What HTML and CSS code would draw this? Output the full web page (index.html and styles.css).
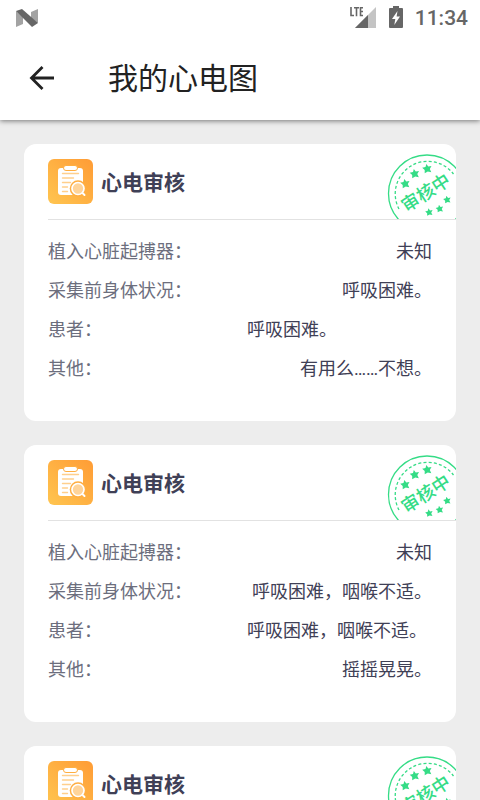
FILE: index.html
```html
<!DOCTYPE html>
<html lang="zh-CN">
<head>
    <meta charset="UTF-8">
    <meta name="viewport" content="width=device-width, initial-scale=1.0">
    <title>我的心电图</title>
    <link rel="stylesheet" href="styles.css">
</head>
<body>
    <!-- 图标定义 -->
    <svg class="defs" width="0" height="0" aria-hidden="true">
        <defs>
            <linearGradient id="orange" x1="0" y1="1" x2="1" y2="0">
                <stop offset="0" stop-color="#ffc550"/>
                <stop offset="1" stop-color="#ff9c35"/>
            </linearGradient>
            <path id="star" d="M-.7-4.600 1.300-2 4.500-2.400 2.800.5 4.300 3.800.8 3-2.300 4.800-2.300 1.500-4.800-.7-1.500-1.600Z"/>
        </defs>
        <symbol id="report" viewBox="0 0 45 45">
            <rect width="45" height="45" rx="6" fill="url(#orange)"/>
            <rect x="10" y="9" width="25" height="27" rx="3" fill="#fff"/>
            <rect x="15.500" y="6.500" width="14" height="5" rx="2.500" fill="#fff" stroke="#ffae40"/>
            <path d="M14.500 14.500h16M14.500 19h11M14.500 23.500h8M14.500 28h5M14.500 32.500h5" fill="none" stroke="#ffcf8c" stroke-width="1.400" stroke-linecap="round"/>
            <circle cx="30" cy="29.500" r="8.300" fill="#ffae42"/>
            <path d="M34 33.500 36.500 36" stroke="#fff" stroke-width="2" stroke-linecap="round"/>
            <circle cx="30" cy="29.500" r="6" fill="#ffd49a" stroke="#fff" stroke-width="1.700"/>
        </symbol>
        <symbol id="stamp" viewBox="0 0 69 66">
            <g fill="none" stroke="#35dc86">
                <circle cx="40" cy="40.500" r="38.500" stroke-width="1.300"/>
                <path d="M12 56A32.500 32.500 0 0 1 66.500 21" stroke-width="1.300" stroke-dasharray="3 2.200"/>
            </g>
            <g fill="#35dc86">
                <use href="#star" x="18" y="30.500"/>
                <use href="#star" x="27.500" y="20.500"/>
                <use href="#star" x="40" y="15.500"/>
                <g transform="translate(42 59) scale(.8)"><use href="#star"/></g>
                <g transform="translate(52.500 55.500) scale(.8)"><use href="#star"/></g>
                <g transform="translate(60 46.500) scale(.8)"><use href="#star"/></g>
            </g>
        </symbol>
    </svg>

    <header>
        <div class="status-bar">
            <svg width="24" height="20" viewBox="0 0 24 20" aria-hidden="true">
                <path d="M0 3 7 9V16L0 19ZM22 1V15L15 10V4Z" fill="#a3a3a3"/>
                <path d="M0 3 6 1 22 15 16 19Z" fill="#666"/>
            </svg>
            <div class="status-right">
                <svg width="27" height="24" viewBox="0 0 27 24" aria-hidden="true">
                    <path d="M26 1V22H5Z" fill="#c4c4c4"/>
                    <path d="M18 9V22H5Z" fill="#666"/>
                    <path d="M1 1V9.500H4M4 1.800H9M6.500 1.800V10.300M13 1.800H10.500V9.500H13M10.500 5.500H13" fill="none" stroke="#666" stroke-width="1.600"/>
                </svg>
                <svg width="14" height="24" viewBox="0 0 14 24" aria-hidden="true">
                    <path d="M4 0H10V2H13Q14 2 14 3V21Q14 22 13 22H1Q0 22 0 21V3Q0 2 1 2H4Z" fill="#666"/>
                    <path d="M8.500 5 3 13H6.300L5.300 19 11 10.500H7.600Z" fill="#fff"/>
                </svg>
                <span class="time">11:34</span>
            </div>
        </div>
        <div class="app-bar">
            <button class="back" aria-label="返回">
                <svg width="26" height="26" viewBox="0 0 26 26" aria-hidden="true">
                    <path d="M25 13H3M13.500 2 2.500 13 13.500 24" fill="none" stroke="#222" stroke-width="2.800"/>
                </svg>
            </button>
            <h1>我的心电图</h1>
        </div>
    </header>

    <main>
        <section class="card">
            <div class="card-head">
                <svg class="report" aria-hidden="true"><use href="#report"/></svg>
                <h2>心电审核</h2>
                <div class="stamp">
                    <svg aria-hidden="true"><use href="#stamp"/></svg>
                    <span>审核中</span>
                </div>
            </div>
            <dl>
                <div class="row"><dt>植入心脏起搏器：</dt><dd>未知</dd></div>
                <div class="row"><dt>采集前身体状况：</dt><dd>呼吸困难。</dd></div>
                <div class="row"><dt>患者：</dt><dd class="patient">呼吸困难。</dd></div>
                <div class="row"><dt>其他：</dt><dd>有用么……不想。</dd></div>
            </dl>
        </section>

        <section class="card">
            <div class="card-head">
                <svg class="report" aria-hidden="true"><use href="#report"/></svg>
                <h2>心电审核</h2>
                <div class="stamp">
                    <svg aria-hidden="true"><use href="#stamp"/></svg>
                    <span>审核中</span>
                </div>
            </div>
            <dl>
                <div class="row"><dt>植入心脏起搏器：</dt><dd>未知</dd></div>
                <div class="row"><dt>采集前身体状况：</dt><dd>呼吸困难，咽喉不适。</dd></div>
                <div class="row"><dt>患者：</dt><dd class="patient">呼吸困难，咽喉不适。</dd></div>
                <div class="row"><dt>其他：</dt><dd>摇摇晃晃。</dd></div>
            </dl>
        </section>

        <section class="card">
            <div class="card-head">
                <svg class="report" aria-hidden="true"><use href="#report"/></svg>
                <h2>心电审核</h2>
                <div class="stamp">
                    <svg aria-hidden="true"><use href="#stamp"/></svg>
                    <span>审核中</span>
                </div>
            </div>
        </section>
    </main>
</body>
</html>
```
FILE: styles.css
```css
* {
    box-sizing: border-box;
}
body {
    margin: 0;
    height: 100vh;
    display: flex;
    flex-direction: column;
    overflow: hidden;
    background-color: #ededed;
    font-family: Roboto, "Noto Sans CJK SC", sans-serif;
    color: #3f4056;
}
svg {
    display: block;
    flex-shrink: 0;
}
.defs {
    position: absolute;
}

/* 顶部 */
header {
    position: relative;
    flex-shrink: 0;
    background-color: #fff;
    box-shadow: 0 1px 5px rgba(0, 0, 0, 0.5);
}
.status-bar {
    display: flex;
    justify-content: space-between;
    align-items: center;
    height: 36px;
    padding: 0 12px 0 16px;
}
.status-right {
    display: flex;
    align-items: center;
    gap: 12px;
}
.time {
    font-size: 21px;
    line-height: 38px;
    font-weight: 500;
    color: #666;
}
.app-bar {
    display: flex;
    align-items: center;
    height: 84px;
    padding: 0 29px;
    gap: 53px;
}
.back {
    padding: 0;
    border: none;
    background: none;
    cursor: pointer;
}
h1 {
    margin: 0;
    padding-top: 2px;
    font-size: 30px;
    line-height: 36px;
    font-weight: 400;
    color: #222;
}

/* 卡片列表 */
main {
    flex: 1;
    min-height: 0;
    overflow: hidden;
    padding: 24px;
}
.card {
    margin-bottom: 24px;
    padding-left: 24px;
    border-radius: 12px;
    background-color: #fff;
    overflow: hidden;
}
.card-head {
    display: flex;
    align-items: center;
    gap: 8px;
    height: 76px;
    border-bottom: 1px solid #e2e2e2;
}
.report {
    width: 45px;
    height: 45px;
}
h2 {
    margin: 0;
    padding-top: 2px;
    font-size: 21px;
    line-height: 30px;
    font-weight: 700;
}
.stamp {
    position: relative;
    width: 69px;
    height: 66px;
    margin-left: auto;
    align-self: flex-end;
}
.stamp svg {
    width: 69px;
    height: 66px;
}
/* 印章上的斜字 */
.stamp span {
    position: absolute;
    top: 27px;
    left: 12px;
    font-size: 18px;
    line-height: 26px;
    font-weight: 500;
    white-space: nowrap;
    color: #35dc86;
    transform: rotate(-33deg);
}
dl {
    margin: 0;
    padding: 12px 24px 33px 0;
}
.row {
    display: flex;
    justify-content: space-between;
    font-size: 18px;
    line-height: 39px;
}
dt {
    color: #6c6e7d;
}
dd {
    margin: 0;
    text-align: right;
}
.patient {
    width: 185px;
    text-align: left;
}
```
